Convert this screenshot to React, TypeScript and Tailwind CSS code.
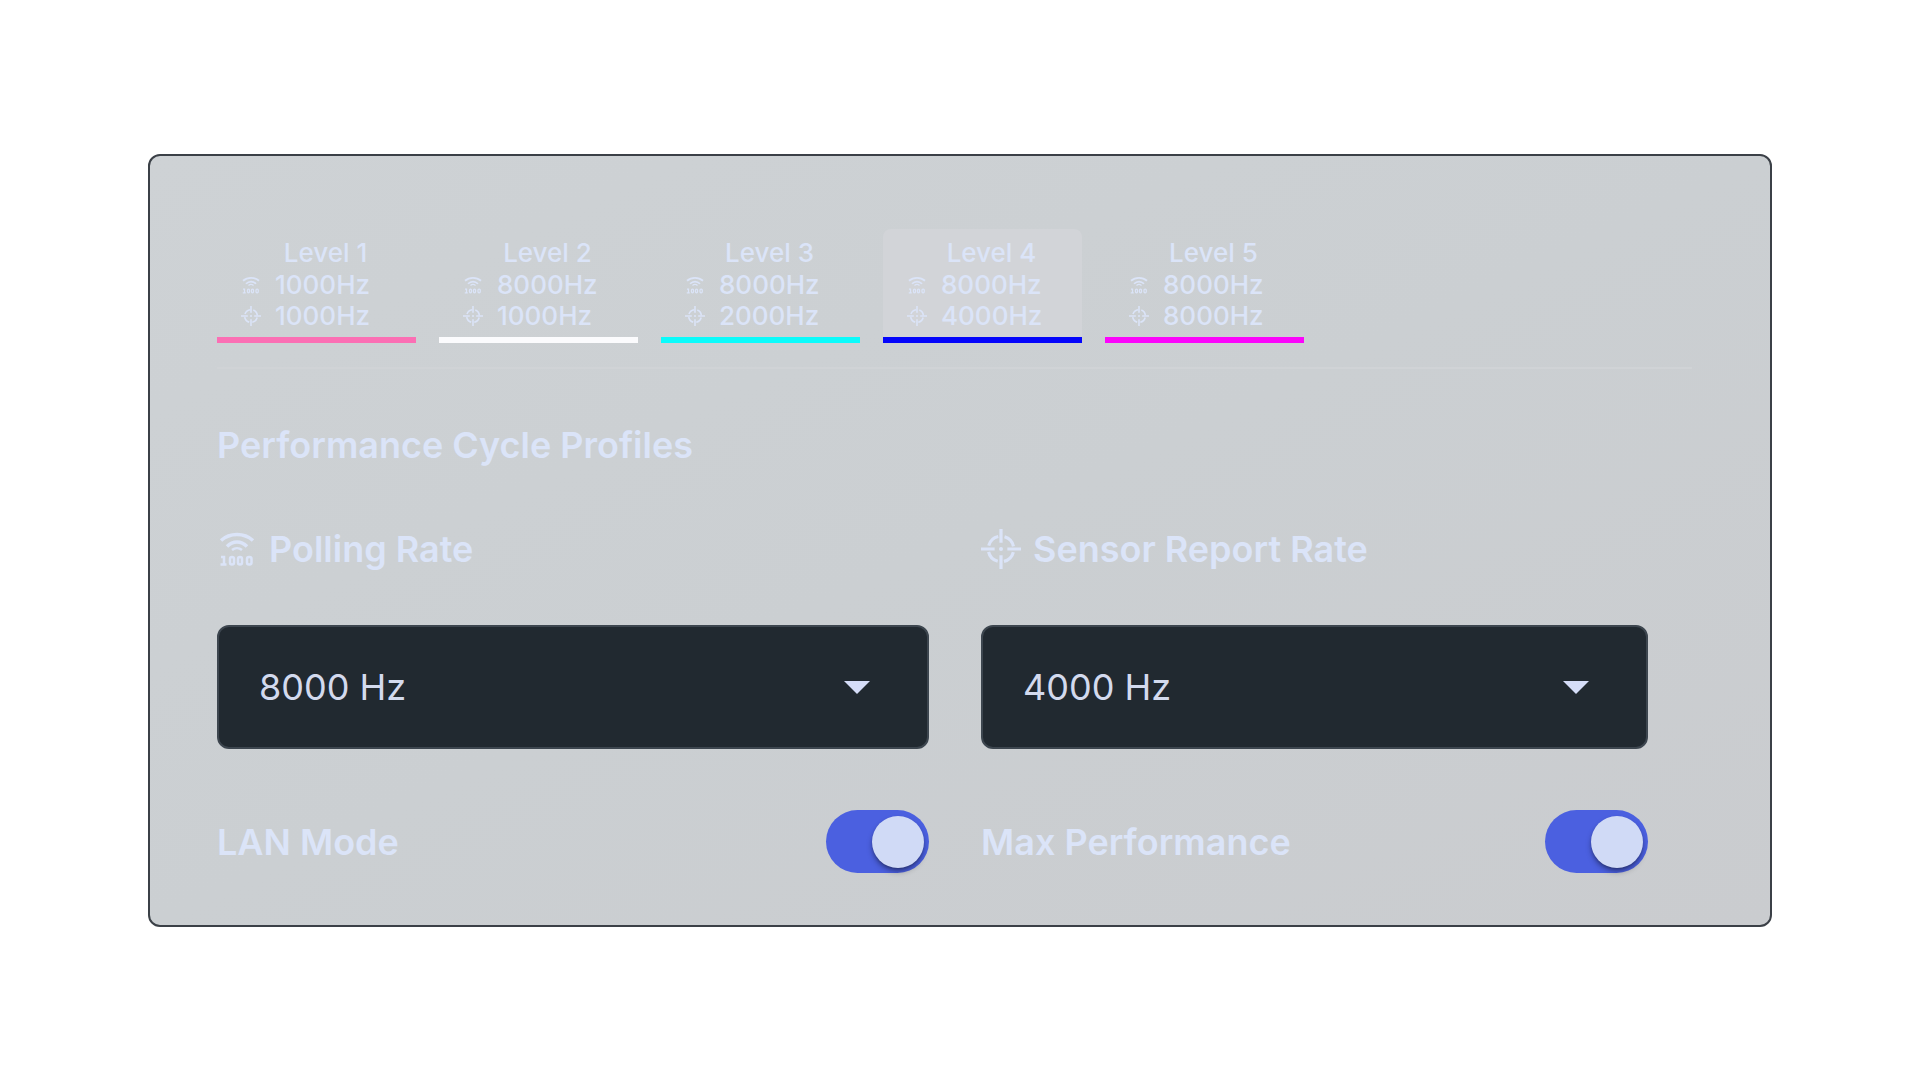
import { useState } from "react";

const levels = [
  { name: "Level 1", polling: "1000Hz", sensor: "1000Hz", bar: "border-[#fb6fb4]" },
  { name: "Level 2", polling: "8000Hz", sensor: "1000Hz", bar: "border-[#fbfbfd]" },
  { name: "Level 3", polling: "8000Hz", sensor: "2000Hz", bar: "border-[#0bfbfb]" },
  { name: "Level 4", polling: "8000Hz", sensor: "4000Hz", bar: "border-[#0505fb]" },
  { name: "Level 5", polling: "8000Hz", sensor: "8000Hz", bar: "border-[#fb05fb]" },
];

const rates = [1000, 2000, 4000, 8000];

function PollingIcon({ className }: { className: string }) {
  return (
    <svg viewBox="-2 -2 40 40" fill="none" stroke="currentColor" className={className} aria-hidden="true">
      <path d="M2 9.5C11 1.5 25 1.5 34 9.5" strokeWidth="3.5" />
      <path d="M8 15.5C14 9.5 22 9.5 28 15.5" strokeWidth="3.5" />
      <path d="M13 19C16 16.5 20 16.5 23 19" strokeWidth="2.5" />
      <path d="M2 26h3v8M1.5 33.5h6" strokeWidth="2.5" />
      <rect x="11" y="26" width="4" height="7.5" rx="2" strokeWidth="2.5" />
      <rect x="19" y="26" width="4" height="7.5" rx="2" strokeWidth="2.5" />
      <rect x="28" y="26" width="4.5" height="7.5" rx="2" strokeWidth="2.5" />
    </svg>
  );
}

function SensorIcon({ className }: { className: string }) {
  return (
    <svg viewBox="0 0 44 44" fill="none" stroke="currentColor" strokeWidth="3.5" className={className} aria-hidden="true">
      <circle cx="22" cy="22" r="14" strokeDasharray="15 7" strokeDashoffset="-3.5" />
      <path d="M22 0v15M22 29v15M0 22h15M29 22h15" />
      <circle cx="22" cy="22" r="2.2" fill="currentColor" stroke="none" />
    </svg>
  );
}

function RateSelect({ id, value, onChange }: { id: string; value: number; onChange: (v: number) => void }) {
  return (
    <div className="relative mt-[52px]">
      <select
        id={id}
        value={value}
        onChange={(e) => onChange(Number(e.target.value))}
        className="h-[124px] w-full appearance-none rounded-xl border-2 border-[#3d464f] bg-[#212930] px-10 text-4xl font-normal text-[#d3daee]"
      >
        {rates.map((rate) => (
          <option key={rate} value={rate}>
            {rate} Hz
          </option>
        ))}
      </select>
      <svg
        viewBox="0 0 26 13"
        className="pointer-events-none absolute top-14 right-[59px] w-[26px] fill-[#d5ddf8]"
        aria-hidden="true"
      >
        <path d="M0 0h26L13 13z" />
      </svg>
    </div>
  );
}

function Toggle({ id, label }: { id: string; label: string }) {
  const [on, setOn] = useState(true);

  return (
    <div className="mt-[61px] flex items-center justify-between">
      <label htmlFor={id}>{label}</label>
      <input
        id={id}
        type="checkbox"
        role="switch"
        checked={on}
        onChange={() => setOn(!on)}
        className="flex h-[63px] w-[103px] appearance-none items-center rounded-full bg-[#8a90a0] px-[5px] before:size-[52px] before:rounded-full before:bg-[#d0daf6] before:shadow-md before:shadow-black/40 checked:justify-end checked:bg-[#4b60e0]"
      />
    </div>
  );
}

export default function App() {
  const [active, setActive] = useState(3);
  const [polling, setPolling] = useState(8000);
  const [sensor, setSensor] = useState(4000);

  return (
    <main className="flex min-h-screen items-center bg-white px-[148px] font-['Inter',sans-serif] text-[#dbe4f8]">
      <section className="w-full rounded-xl border-2 border-[#3b4047] bg-linear-to-br from-[#ced2d5] via-[#cbcfd2] to-[#cacccf] pt-[73px] pr-[78px] pb-[52px] pl-[67px]">
        {/* Level tabs */}
        <div role="tablist" className="flex gap-[23px] border-b-2 border-[#d0d3d6] pb-6">
          {levels.map((level, i) => (
            <button
              key={level.name}
              type="button"
              role="tab"
              aria-selected={i === active}
              onClick={() => setActive(i)}
              className={`flex w-[199px] flex-col rounded-t-lg border-b-6 pt-2 pb-1.5 text-[26px] font-medium ${level.bar} ${
                i === active ? "bg-[#d2d4d8]" : ""
              }`}
            >
              <span className="w-full pl-[18px] text-center leading-8">{level.name}</span>
              <span className="flex items-center gap-3.5 pl-6 leading-[31px]">
                <PollingIcon className="size-5" />
                {level.polling}
              </span>
              <span className="flex items-center gap-3.5 pl-6 leading-[31px]">
                <SensorIcon className="size-5" />
                {level.sensor}
              </span>
            </button>
          ))}
        </div>

        <div className="pr-11 text-4xl font-semibold">
          <h2 className="mt-14">Performance Cycle Profiles</h2>

          <div className="mt-15 grid grid-cols-[712fr_667fr] gap-x-[52px]">
            <div>
              <label htmlFor="polling" className="flex h-12 items-center gap-3">
                <PollingIcon className="size-10" />
                Polling Rate
              </label>
              <RateSelect id="polling" value={polling} onChange={setPolling} />
              <Toggle id="lan-mode" label="LAN Mode" />
            </div>
            <div>
              <label htmlFor="sensor" className="flex h-12 items-center gap-3">
                <SensorIcon className="size-10" />
                Sensor Report Rate
              </label>
              <RateSelect id="sensor" value={sensor} onChange={setSensor} />
              <Toggle id="max-performance" label="Max Performance" />
            </div>
          </div>
        </div>
      </section>
    </main>
  );
}
